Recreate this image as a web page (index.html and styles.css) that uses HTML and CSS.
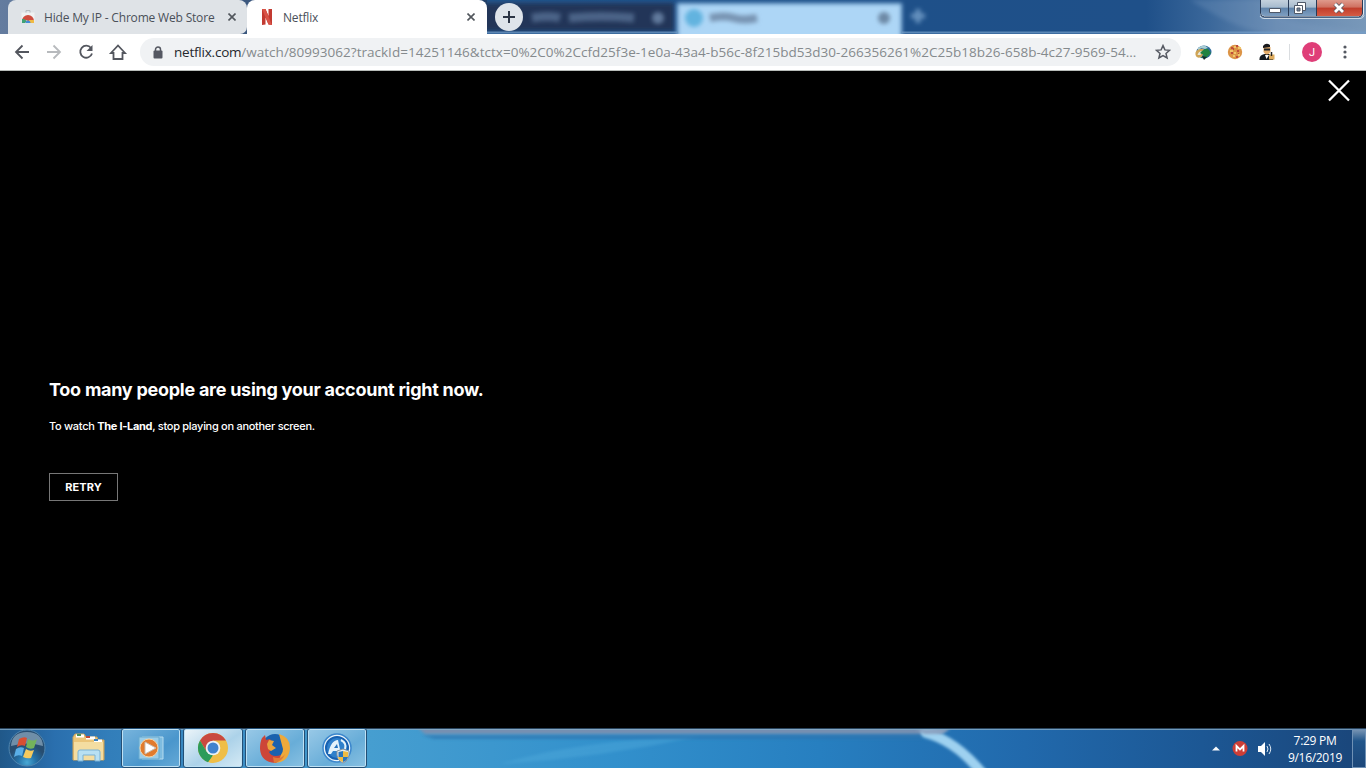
FILE: index.html
```html
<!DOCTYPE html>
<html lang="en">
<head>
<meta charset="utf-8">
<title>Netflix</title>
<link rel="stylesheet" href="styles.css">
</head>
<body>
<div class="desktop">
  <header class="tabstrip">
    <div class="tab tab-idle">
      <svg class="fav" width="16" height="16" viewBox="0 0 16 16"><path d="M1.500 3.500h13V12a2 2 0 0 1-2 2h-9a2 2 0 0 1-2-2z" fill="#f0f2f2"/><path d="M6 3.500V1.500h4v2" fill="none" stroke="#b3babd"/><path d="M2 12a6 6 0 0 1 12 0l-4 1-4-2z" fill="#cf4c3e"/><path d="M2 10v4h3l2-2-3-2z" fill="#42a275"/><path d="M9 11h5v3H8z" fill="#f0ba45"/><path d="M5.500 14a2.500 2.500 0 0 1 5 0z" fill="#438bd8"/></svg>
      <span class="tab-title store-title">Hide My IP - Chrome Web Store</span>
      <svg class="tab-x" width="8" height="8" viewBox="0 0 8 8"><path d="M.5.5l7 7m0-7l-7 7" stroke="#51565c" stroke-width="1.600"/></svg>
    </div>
    <div class="tab tab-active">
      <svg class="fav" width="16" height="16" viewBox="0 0 16 16"><path d="M3 0h3.500l3 7V0H13v16l-3.500-.5-3-7v7L3 16z" fill="#c23a31"/><path d="M3 0h3.500L13 16l-3.500-.5z" fill="#d95347"/></svg>
      <span class="tab-title">Netflix</span>
      <svg class="tab-x" width="8" height="8" viewBox="0 0 8 8"><path d="M.5.5l7 7m0-7l-7 7" stroke="#51565c" stroke-width="1.600"/></svg>
    </div>
    <div class="new-tab"><svg width="12" height="12" viewBox="0 0 12 12"><path d="M6 0v12M0 6h12" stroke="#2b3545" stroke-width="2"/></svg></div>
    <div class="glass">
      <svg width="879" height="34" viewBox="487 0 879 34">
        <defs>
          <filter id="soft" filterUnits="userSpaceOnUse" x="470" y="-10" width="910" height="60"><feGaussianBlur stdDeviation="2.200"/></filter>
          <linearGradient id="air"><stop offset="0" stop-color="#23568e"/><stop offset=".45" stop-color="#1e5089"/><stop offset=".75" stop-color="#1f5089"/><stop offset=".82" stop-color="#3a679a"/><stop offset=".9" stop-color="#6588b0"/><stop offset="1" stop-color="#7898b9"/></linearGradient>
        </defs>
        <path d="M487 0h879v34H487z" fill="url(#air)"/>
        <path d="M1190 0h70c20 22 40 25 106 30v4h-90c-35-4-55-15-86-34z" fill="#84a3c6" opacity=".25" filter="url(#soft)"/>
        <path d="M480 3h194v28H480z" fill="#243558" filter="url(#soft)"/>
        <path d="M678 4h223v36H678z" fill="#add6f6" stroke="#8dbce2" stroke-width="2" filter="url(#soft)"/>
        <g filter="url(#soft)"><circle cx="694" cy="18" r="9" fill="#62b3df"/><path d="M710 18q15-3 24 0t23 0" fill="none" stroke="#7894b3" stroke-width="8"/><circle cx="884" cy="18" r="6" fill="#6d89a6"/><path d="M532 18q17-3 28 0m9 0q32-3 65 0" fill="none" stroke="#4c6387" stroke-width="9"/><circle cx="658" cy="18" r="6" fill="#60799b"/><path d="M911 16h14m-7-7v14" stroke="#6591be" stroke-width="5"/></g>
        <path d="M487 32.500h190m225 0h464" stroke="#76a0cb" stroke-width="2" opacity=".7"/>
      </svg>
      <svg class="window-buttons" width="106" height="20" viewBox="0 0 106 20">
        <defs><linearGradient id="btn" x2="0" y2="1"><stop stop-color="#c4d1dd"/><stop offset=".45" stop-color="#a7bbce"/><stop offset=".5" stop-color="#5f83aa"/><stop offset="1" stop-color="#7e9fc1"/></linearGradient><linearGradient id="redbtn" x2="0" y2="1"><stop stop-color="#df9a8c"/><stop offset=".45" stop-color="#cf7060"/><stop offset=".5" stop-color="#c03d2b"/><stop offset="1" stop-color="#d45c45"/></linearGradient></defs>
        <path d="M1 0v13q0 4 4 4h96q4 0 4-4V0z" fill="#e1e9f1"/><path d="M2 0v12q0 4 4 4h24V0z" fill="url(#btn)"/><path d="M30 0h28v16H30z" fill="url(#btn)"/><path d="M58 0h46v12q0 4-4 4H58z" fill="url(#redbtn)"/><path d="M1.500 0v13q0 4 4 4h94q4 0 4-4V0M29.500 0v16M57.500 0v16" stroke="#293b57" fill="none"/><path d="M1 16q1 2.500 4 2.500h96q3 0 4-3" fill="none" stroke="#cedae5"/>
        <path d="M10.500 8.500h11v4h-11z" fill="white" stroke="#4e5868"/><path d="M38.500 2.500h8v8h-8z" fill="white" stroke="#4e5868"/><path d="M35.500 5.500h8v8h-8z" fill="white" stroke="#4e5868"/><path d="M38 8h3v3h-3z" fill="#6f8196" stroke="#4e5868"/><path d="M76 4l8 8m0-8l-8 8" stroke="#5b5964" stroke-width="4.500"/><path d="M76 4l8 8m0-8l-8 8" stroke="white" stroke-width="2.800"/>
      </svg>
    </div>
  </header>

  <nav class="toolbar">
    <svg class="nav-icons" width="134" height="36" viewBox="0 0 134 36" fill="none" stroke="#53565e" stroke-width="1.800"><path d="M29 18H16m6.500-6.500L16 18l6.500 6.500"/><path d="M47 18h13m-6.500-6.500L60 18l-6.500 6.500" stroke="#b7babd"/><path d="M91 14a6 6 0 1 0 1 5.500"/><path d="M92.500 11v6h-6z" fill="#53565e" stroke="none"/><path d="M111 19h2.500v6h9v-6h2.500L118 11.500z"/></svg>
    <div class="address">
      <svg class="lock" width="10" height="13" viewBox="0 0 10 13"><path d="M2.500 6V3.500a2.500 2.500 0 0 1 5 0V6" fill="none" stroke="#555862" stroke-width="1.500"/><rect x=".5" y="4.500" width="9" height="8" rx="1" fill="#555862"/></svg>
      <span class="url"><span class="domain">netflix.com</span>/watch/80993062?trackId=14251146&amp;tctx=0%2C0%2Ccfd25f3e-1e0a-43a4-b56c-8f215bd53d30-266356261%2C25b18b26-658b-4c27-9569-54...</span>
      <svg class="star" width="16" height="16" viewBox="0 0 16 16"><path d="M8 1.600l1.900 4.300 4.700.4-3.600 3.100 1.100 4.600L8 11.600 3.900 14 5 9.400 1.400 6.300l4.700-.4z" fill="none" stroke="#555962" stroke-width="1.500"/></svg>
    </div>
    <svg class="extensions" width="84" height="20" viewBox="1194 42 84 20">
      <ellipse cx="1204" cy="52" rx="7.500" ry="6.500" fill="#2d6c9c"/><path d="M1198 48q6-5 10 0l-3 1-4-1-3 4z" fill="#a9cdd3"/><path d="M1195.500 55q-1-5 5-6 4-1 4 3l-3 5q-5 2-6-2z" fill="#cfa456"/><path d="M1197.500 55q1-4 5-4l-2 4z" fill="#e6e8da"/><path d="M1200 53q5-5 8-4l3 4-4 4-6 1 3-3z" fill="#218342"/><path d="M1202 56l5 1-3 3z" fill="#152e2c"/>
      <circle cx="1235" cy="52" r="7.200" fill="#dc9446"/><path d="M1231 48h2m3-2h2m-1 5h2m-8 2h2m3 4h2m-5-8h1m4 5h1" stroke="#bd4b3a" stroke-width="2"/><path d="M1234 47h2m-6 4h3m1 2h2m2 2h2m-7 1h2m3-8h3" stroke="#f0c56b" stroke-width="2"/>
      <path d="M1259.500 60q-.5-5 5-6h5l4 6z" fill="#15191e"/><path d="M1263.500 47h7v5q-4 5-7 0z" fill="#e6ae6b"/><path d="M1263 48v-2q3-4 7-1v2z" fill="#18191c"/><path d="M1264 48.500h6v2h-6z" fill="#20252b"/><path d="M1265 55l1.500 4 2.500-4z" fill="white"/><path d="M1269 54.500h5.500v5H1269z" fill="#dfac5d"/><path d="M1271.500 52v4" stroke="#222" stroke-width="1.500"/>
    </svg>
    <span class="divider"></span><span class="avatar">J</span>
    <svg class="menu" width="4" height="16" viewBox="0 0 4 16"><g fill="#555962"><circle cx="2" cy="3" r="1.600"/><circle cx="2" cy="8" r="1.600"/><circle cx="2" cy="13" r="1.600"/></g></svg>
  </nav>

  <main class="player">
    <svg class="player-close" width="24" height="24" viewBox="0 0 24 24"><path d="M2 1.500l20 20m0-20l-20 20" stroke="white" stroke-width="2.300"/></svg>
    <section class="message"><h1>Too many people are using your account right now.</h1><p>To watch <b>The I-Land</b>, stop playing on another screen.</p><button>RETRY</button></section>
  </main>

  <footer class="taskbar">
    <svg class="wallpaper" width="1366" height="40" viewBox="0 0 1366 40">
      <defs><linearGradient id="sky"><stop offset="0" stop-color="#205889"/><stop offset=".04" stop-color="#2a6fae"/><stop offset=".08" stop-color="#327eba"/><stop offset=".27" stop-color="#469ed0"/><stop offset=".45" stop-color="#3290cc"/><stop offset=".6" stop-color="#277fc0"/><stop offset=".75" stop-color="#2169ac"/><stop offset=".88" stop-color="#1c5794"/><stop offset="1" stop-color="#1a4579"/></linearGradient><filter id="haze" filterUnits="userSpaceOnUse" x="0" y="-20" width="1366" height="80"><feGaussianBlur stdDeviation="1.700"/></filter></defs>
      <path d="M0 0h1366v40H0z" fill="url(#sky)"/><path d="M500 36q80-24 200-28Q600 30 500 36z" fill="#56b0df" opacity=".35" filter="url(#haze)"/><path d="M422 7h500v4H434z" fill="#2d75ae" opacity=".7" filter="url(#haze)"/><path d="M418 0h532l-8 6H425z" fill="#7890b1" filter="url(#haze)"/><path d="M926 5q30 8 56 40" fill="none" stroke="#9ed1f0" stroke-width="10" stroke-linecap="round" filter="url(#haze)"/><path d="M916 1h34l-10 5h-16z" fill="#8ba3c1" filter="url(#haze)"/><path d="M0 .5h1366" stroke="#29445d"/><path d="M0 1.500h1366" stroke="#8baec7" opacity=".75"/>
    </svg>
    <div class="launchers">
      <svg class="start" width="38" height="38" viewBox="0 0 38 38"><defs><radialGradient id="orb" cy=".9"><stop stop-color="#48a8d4"/><stop offset=".5" stop-color="#2471a7"/><stop offset="1" stop-color="#274d70"/></radialGradient></defs><circle cx="19" cy="19" r="18" fill="url(#orb)" stroke="#4f86b0"/><path d="M3 17Q4 3 19 3t16 14q-15-5-32 0z" fill="#b7d0df" opacity=".5"/><path d="M11 10q5-3 8-1l-2 8q-4-2-8 1z" fill="#d84f32"/><path d="M20 10q5 3 9 0l-3 9q-4 2-8-1z" fill="#74b35b"/><path d="M8 20q4-3 8-1l-2 8q-4-2-8 1z" fill="#5aaee6"/><path d="M18 20q4 3 8 1l-3 8q-4 1-8-1z" fill="#f5ca5e"/></svg>
      <svg class="explorer" width="34" height="30" viewBox="0 0 34 30"><path d="M1 4l2-3h9l2 3h11l1 3h6v20H1z" fill="#ebc579" stroke="#c9a25c"/><path d="M4 3h8M14 5h9M22 8h8" stroke="white" stroke-width="3"/><path d="M5 2h4" stroke="#47905b" stroke-width="2"/><path d="M14 4h4" stroke="#bf493b" stroke-width="2"/><path d="M22 7h4" stroke="#3b81bb" stroke-width="2"/><path d="M2 9h29v18H2z" fill="#f4dda1"/><path d="M6 28V19q0-2 2-2h18q2 0 2 2v9h-5v-6H11v6z" fill="#b8e0f3" stroke="#7bb2d5"/></svg>
      <div class="task media"><svg width="28" height="28" viewBox="0 0 28 28"><path d="M5 3h21v22H5z" fill="#7ebce0" stroke="#b4dbef"/><path d="M2 3h20v22H2z" fill="#9bcde8" stroke="#69aace"/><circle cx="12" cy="14" r="9" fill="#e17b2d" stroke="#f6d1a0"/><path d="M8 8v12l11-6z" fill="white" stroke="#c8bdb0"/></svg></div>
      <div class="task chrome"><svg width="32" height="32" viewBox="0 0 32 32"><circle cx="16" cy="16" r="15" fill="#efbe47"/><path d="M3 8.500A15 15 0 0 1 29 8.500H16l-6.500 11z" fill="#c94940"/><path d="M3 8.500l6.500 11 6.500 4-5 6.700A15 15 0 0 1 3 8.500z" fill="#2d9b5a"/><path d="M16 23.500L12 30a15 15 0 0 0 4 1l6.500-11z" fill="#efbe47"/><circle cx="16" cy="16" r="7.300" fill="#edf3f6"/><circle cx="16" cy="16" r="5.500" fill="#3f83ce"/></svg></div>
      <div class="task firefox"><svg width="32" height="32" viewBox="0 0 32 32"><circle cx="16" cy="15" r="13" fill="#1961ae"/><path d="M20 2q11 3 11 14-1 14-15 15v-5q8-2 8-9z" fill="#eea93a"/><path d="M3 6l3-3 1 5 4-1 2 3-3 4 5 2-5 4q3 6 12 3-3 8-6 8Q2 30 1 17q0-7 2-11z" fill="#cd4638"/><path d="M10 8l5 1-2 4 4 3-5 3-3-2-1-5z" fill="#e9a43c"/><path d="M14 25q8 3 12-3-3 8-11 9z" fill="#e07a38"/></svg></div>
      <div class="task vpn"><svg width="32" height="32" viewBox="0 0 32 32"><circle cx="16" cy="16" r="14" fill="#eaf5fb" stroke="#3c87cd" stroke-width="1.500"/><circle cx="16" cy="16" r="11" fill="#2f80cb" stroke="#1761b2" stroke-width="2"/><path d="M7 22q3-14 10-14l3 14h-4v-3h-4l-2 3z" fill="#e4f3fb"/><path d="M13 16l3-4 1 4z" fill="#2472bd"/><path d="M20 8q6 3 4 9" stroke="#e4f3fb" stroke-width="2" fill="none"/><path d="M16 19l6-2 6 2q1 9-6 12-7-3-6-12z" fill="#e4eef3" stroke="#8a969e"/><path d="M17.500 20l4.500-1v6h-4.500z" fill="#2a76bd"/><path d="M22 19l5 1v5h-5z" fill="#f0bb43"/><path d="M17 25h5v5q-4-1-5-5z" fill="#f0bb43"/><path d="M22 25h5q-1 4-5 5z" fill="#2a76bd"/></svg></div>
    </div>
    <div class="tray"><svg width="64" height="22" viewBox="0 0 64 22"><path d="M4 13.500l4-4 4 4z" fill="#f5f8fb"/><circle cx="32" cy="11.500" r="7.500" fill="#cd3e36"/><path d="M28.500 14.500V9L32 12.500 35.500 9v5.500" fill="none" stroke="white" stroke-width="1.800"/><path d="M50 9h3l4-4v14l-4-4h-3z" fill="#fff"/><path d="M59 9q2 3 0 6m2-8q3.500 5 0 10" stroke="#dce7f1" fill="none"/></svg><div class="clock"><span>7:29 PM</span><span>9/16/2019</span></div><span class="peek"></span></div>
  </footer>
</div>
</body>
</html>
```
FILE: styles.css
```css
* { box-sizing: border-box; }
body { margin: 0; width: 1366px; height: 768px; overflow: hidden; background: #000; font-family: "Open Sans", sans-serif; }
svg { display: block; flex: none; }
.desktop { display: grid; grid-template-rows: 34px 37px 657px 40px; height: 768px; }
.tabstrip { display: flex; position: relative; background: linear-gradient(90deg, #647c9f, #203f68 30%, #24446d); }
.tab { display: flex; align-items: center; height: 34px; font-size: 12px; color: #4a5059; white-space: nowrap; }
.tab-idle { width: 239px; margin-left: 8px; padding-left: 12px; padding-right: 11px; background: #dfe3e7; border-radius: 8px 8px 7px 0; }
.tab-active { width: 240px; padding-left: 12px; padding-right: 12px; background: #fff; border-radius: 8px 8px 0 0; }
.tab-title { margin-left: 8px; letter-spacing: -.18px; }
.tab-x { margin-left: auto; }
.glass { position: relative; width: 879px; }
.new-tab { position: absolute; z-index: 2; left: 495px; top: 3px; width: 28px; height: 28px; border-radius: 50%; background: #dee4ea; display: grid; place-items: center; }
.window-buttons { position: absolute; top: 0; left: 772px; }
.toolbar { display: flex; align-items: center; background: #fff; border-bottom: 1px solid #b8bcb9; }
.address { width: 1041px; height: 28px; margin-left: 6px; border-radius: 14px; display: flex; align-items: center; background: #f0f2f4; padding-left: 13px; padding-right: 10px; }
.url { margin-left: 11px; width: 970px; white-space: nowrap; color: #858a8d; font-size: 13.5px; letter-spacing: .02px; }
.domain { color: #25282d; letter-spacing: -.22px; }
.star { margin-left: auto; }
.extensions { margin-left: 13px; }
.divider { height: 16px; width: 1px; background: #dadde0; margin-left: 11px; }
.avatar { display: grid; place-items: center; width: 20px; height: 20px; margin-left: 12px; border-radius: 50%; background: #df3e78; color: #fff; font: 11px Roboto, sans-serif; }
.menu { margin-left: 21px; }
.player { position: relative; background: #000; color: #fff; padding: 308px 49px 0; font-family: Inter, sans-serif; }
.player-close { position: absolute; right: 15px; top: 8px; }
.message h1 { margin: 0; font-size: 18px; line-height: 22px; font-weight: 700; letter-spacing: -.265px; white-space: nowrap; width: max-content; }
.message p { margin: 17px 0 0; font-size: 11px; line-height: 16px; font-weight: 500; letter-spacing: -.29px; width: max-content; }
.message button { display: block; margin-top: 39px; width: 69px; height: 28px; padding: 0; border: 1px solid #777; background: #000; color: #fff; font: 700 11px Inter, sans-serif; letter-spacing: .1px; }
.taskbar { position: relative; display: flex; justify-content: space-between; }
.wallpaper { position: absolute; inset: 0; }
.launchers { position: relative; display: flex; align-items: center; }
.start { margin-left: 8px; }
.explorer { margin-left: 26px; margin-right: 15px; }
.task { width: 60px; height: 40px; margin-right: 2px; border: 1px solid #234f76; border-radius: 3px; box-shadow: inset 0 0 0 1px #bee1f4; display: grid; place-items: center; background: linear-gradient(145deg, #99c9e7, #68add8 60%, #89c1e2); }
.media { background: linear-gradient(145deg, #79b5dd, #4a96cc 60%, #66aad7); }
.chrome { background: linear-gradient(145deg, #eef6fa, #acd2e9 55%, #d5eaf5); }
.tray { position: relative; display: flex; align-items: center; }
.clock { display: grid; justify-items: center; width: 66px; margin-left: 10px; margin-right: 4px; padding-top: 2px; color: #fff; font-size: 12px; line-height: 17px; letter-spacing: -.3px; }
.peek { width: 14px; height: 39px; align-self: end; border: 1px solid #6f91b5; background: linear-gradient(#7592b2, #21558a 30%, #1c477a); }
```
